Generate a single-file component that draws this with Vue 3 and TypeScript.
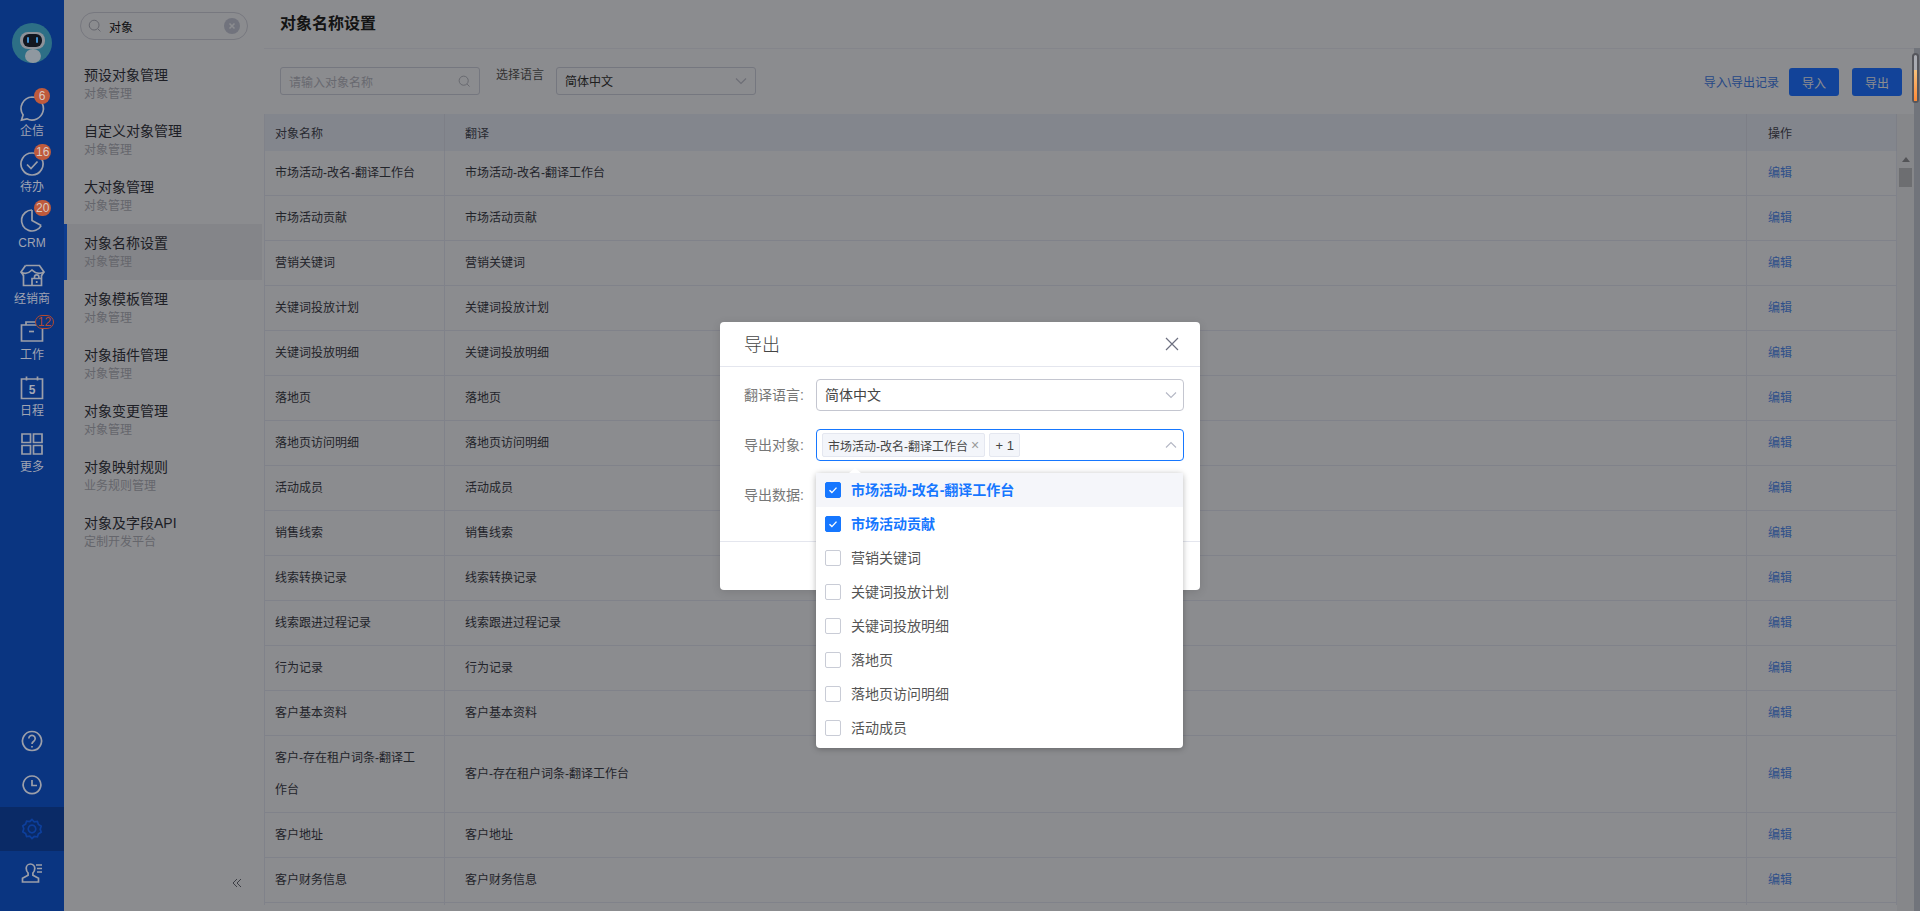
<template>
  <div class="page">
    <aside class="rail">
      <div class="avatar">
        <svg viewBox="0 0 40 40" width="40" height="40">
          <circle cx="20" cy="20" r="20" fill="#2d6f86" />
          <ellipse cx="21" cy="33" rx="8" ry="7" fill="#8f98a0" />
          <rect x="8" y="9" width="25" height="17" rx="8" fill="#8d9299" />
          <rect x="11" y="11" width="19" height="13" rx="6" fill="#11161f" />
          <rect x="15" y="14" width="2" height="6" rx="1" fill="#3f8fd0" />
          <rect x="24" y="14" width="2" height="6" rx="1" fill="#3f8fd0" />
        </svg>
      </div>
      <nav class="rail-top">
        <div v-for="item in railItems" :key="item.label" class="rail-item">
          <svg class="rail-icon" viewBox="0 0 28 28" width="28" height="28">
            <path v-for="d in item.paths" :key="d" :d="d" />
            <text v-if="item.day" x="14" y="18.500" class="day">{{ item.day }}</text>
          </svg>
          <span class="rail-label">{{ item.label }}</span>
          <span v-if="item.badge" class="badge" :class="{ outline: item.outline }">{{ item.badge }}</span>
        </div>
      </nav>
      <div class="rail-bottom">
        <div v-for="(tool, i) in railTools" :key="i" class="rail-tool" :class="{ active: tool.active }">
          <svg class="rail-icon" viewBox="0 0 28 28" width="28" height="28">
            <path v-for="d in tool.paths" :key="d" :d="d" />
          </svg>
        </div>
      </div>
    </aside>

    <section class="panel">
      <div class="panel-search">
        <svg viewBox="0 0 16 16" width="14" height="14" class="mag">
          <circle cx="7" cy="7" r="5.6" />
          <path d="M11.2 11.2l3 3" />
        </svg>
        <span class="panel-query">对象</span>
        <span class="panel-clear">
          <svg viewBox="0 0 16 16" width="16" height="16">
            <circle cx="8" cy="8" r="8" fill="#bcc0d0" />
            <path d="M5.5 5.5l5 5M10.5 5.5l-5 5" stroke="#e8e9f0" stroke-width="1.6" />
          </svg>
        </span>
      </div>
      <ul class="panel-list">
        <li v-for="m in menus" :key="m.title" class="panel-item" :class="{ current: m.current }">
          <div class="panel-title">{{ m.title }}</div>
          <div class="panel-sub">{{ m.sub }}</div>
        </li>
      </ul>
      <svg class="collapse" viewBox="0 0 10 10" width="10" height="10">
        <path d="M5 1L1 5l4 4M9 1L5 5l4 4" />
      </svg>
    </section>

    <main class="main">
      <header class="main-head">对象名称设置</header>
      <div class="toolbar">
        <div class="field search">
          <span class="placeholder">请输入对象名称</span>
          <svg viewBox="0 0 16 16" width="13" height="13" class="mag">
            <circle cx="7" cy="7" r="5.6" />
            <path d="M11.2 11.2l3 3" />
          </svg>
        </div>
        <span class="lang-label">选择语言</span>
        <div class="field lang">
          <span class="nudge">简体中文</span>
          <svg viewBox="0 0 12 8" width="12" height="8" class="chev"><path d="M1 1.5l5 5 5-5" /></svg>
        </div>
        <a class="records">导入\导出记录</a>
        <button class="btn">导入</button>
        <button class="btn">导出</button>
      </div>
      <div class="table-area">
        <div class="table-clip">
          <table class="grid">
            <colgroup>
              <col style="width: 180px" />
              <col />
              <col style="width: 150px" />
            </colgroup>
            <thead>
              <tr>
                <th>对象名称</th>
                <th>翻译</th>
                <th class="ops">操作</th>
              </tr>
            </thead>
            <tbody>
              <tr v-for="name in rows" :key="name">
                <td>{{ name }}</td>
                <td>{{ name }}</td>
                <td class="ops"><a class="edit">编辑</a></td>
              </tr>
              <tr class="cut"><td></td><td></td><td></td></tr>
            </tbody>
          </table>
        </div>
        <div class="table-bar">
          <span class="bar-arrow"></span>
          <span class="bar-thumb"></span>
        </div>
      </div>
    </main>
    <div class="page-strip"></div>

    <div class="mask">
      <div class="dialog">
        <div class="dialog-head">
          <span class="nudge">导出</span>
          <svg viewBox="0 0 14 14" width="14" height="14" class="close"><path d="M1 1l12 12M13 1L1 13" /></svg>
        </div>
        <div class="dialog-body">
          <div class="form-row">
            <label class="nudge">翻译语言:</label>
            <div class="control">
              <span class="nudge">简体中文</span>
              <svg viewBox="0 0 12 8" width="12" height="8" class="chev"><path d="M1 1.5l5 5 5-5" /></svg>
            </div>
          </div>
          <div class="form-row">
            <label class="nudge">导出对象:</label>
            <div class="control focused">
              <span class="tag">市场活动-改名-翻译工作台<i class="tag-x">×</i></span>
              <span class="tag more">+ 1</span>
              <svg viewBox="0 0 12 8" width="12" height="8" class="chev"><path d="M1 6.5l5-5 5 5" /></svg>
            </div>
          </div>
          <div class="form-row">
            <label class="nudge">导出数据:</label>
          </div>
        </div>
        <div class="dialog-foot"></div>

        <div class="dropdown">
          <span class="caret"></span>
          <div v-for="(opt, i) in options" :key="opt" class="option" :class="{ on: i < 2, hover: i === 0 }">
            <span class="box">
              <svg v-if="i < 2" viewBox="0 0 16 16" width="16" height="16"><path d="M4.5 8.2l2.4 2.4 4.6-5" /></svg>
            </span>
            <span class="nudge">{{ opt }}</span>
          </div>
        </div>
      </div>
    </div>
    <div class="page-thumb"><span></span></div>
  </div>
</template>

<script setup lang="ts">
interface RailItem {
  label: string;
  paths: string[];
  badge?: string;
  outline?: boolean;
  day?: string;
}

const railItems: RailItem[] = [
  {
    label: '企信',
    badge: '6',
    paths: ['M14 2a11.500 11.500 0 1 1-5.200 21.800L3.500 25l1.600-5A11.500 11.500 0 0 1 14 2z'],
  },
  {
    label: '待办',
    badge: '16',
    paths: ['M14 2a11 11 0 1 0 .01 0z', 'M9 13.500l4 4 6.500-7'],
  },
  {
    label: 'CRM',
    badge: '20',
    paths: ['M14 3a10.500 10.500 0 1 0 9.200 15.600', 'M14 3v10.500l9.200 5.100'],
  },
  {
    label: '经销商',
    paths: [
      'M7.500 2.500h14l4.500 6.500-2.500 3.500',
      'M7.500 2.500L3 9l2.500 3.500',
      'M3 9c3 2 7 2 11-2 4 4 8 4 12 2',
      'M5.500 12v10.500h18V12',
      'M14 22.500v-7h9.500',
      'M16.500 15.500V14a2.200 2.200 0 0 1 4.400 0v1.500',
      'M18.700 18v2',
    ],
  },
  {
    label: '工作',
    badge: '12',
    outline: true,
    paths: ['M3.500 6h21v16h-21z', 'M8 6V3h11', 'M11 12.500h5'],
  },
  {
    label: '日程',
    day: '5',
    paths: ['M3.500 4h21v19.500h-21z', 'M8.500 1.500v4M19.500 1.500v4'],
  },
  {
    label: '更多',
    paths: [
      'M4 3h8.500v8.500H4z',
      'M15.500 3H24v8.500h-8.500z',
      'M4 14.500h8.500V23H4z',
      'M15.500 14.500H24V23h-8.500z',
    ],
  },
];

const railTools: { paths: string[]; active?: boolean }[] = [
  {
    paths: [
      'M14 4.500a9.500 9.500 0 1 0 .01 0z',
      'M10.800 11.500a3.200 3.200 0 1 1 5 2.700c-1.200.8-1.800 1.400-1.800 2.800',
      'M14 19v1.600',
    ],
  },
  { paths: ['M14 5a8.800 8.800 0 1 0 .01 0z', 'M14 9v5.500h5'] },
  {
    active: true,
    paths: [
      'M14 4.500l2.200 2.400 3.200-.4 1 3 2.800 1.700-1 3 1 3-2.800 1.700-1 3-3.200-.4L14 23.500l-2.200-2.400-3.200.4-1-3-2.800-1.700 1-3-1-3 2.800-1.700 1-3 3.200.4z',
      'M14 10.200a3.800 3.800 0 1 0 .01 0z',
    ],
  },
  {
    paths: [
      'M12.500 5a4.300 4.300 0 0 0-4.300 4.300c0 2 .8 3.600 1.900 4.700v2.300l-5.600 3V23h16v-3.700l-5.600-3V14c1.100-1.100 1.900-2.700 1.900-4.700A4.300 4.300 0 0 0 12.500 5z',
      'M18 6h6M19 9.500h5M19 13h5',
    ],
  },
];

const menus = [
  { title: '预设对象管理', sub: '对象管理' },
  { title: '自定义对象管理', sub: '对象管理' },
  { title: '大对象管理', sub: '对象管理' },
  { title: '对象名称设置', sub: '对象管理', current: true },
  { title: '对象模板管理', sub: '对象管理' },
  { title: '对象插件管理', sub: '对象管理' },
  { title: '对象变更管理', sub: '对象管理' },
  { title: '对象映射规则', sub: '业务规则管理' },
  { title: '对象及字段API', sub: '定制开发平台' },
];

const rows = [
  '市场活动-改名-翻译工作台',
  '市场活动贡献',
  '营销关键词',
  '关键词投放计划',
  '关键词投放明细',
  '落地页',
  '落地页访问明细',
  '活动成员',
  '销售线索',
  '线索转换记录',
  '线索跟进过程记录',
  '行为记录',
  '客户基本资料',
  '客户-存在租户词条-翻译工作台',
  '客户地址',
  '客户财务信息',
];

const options = rows.slice(0, 8);
</script>

<style>
html,
body {
  margin: 0;
  height: 100%;
  overflow: hidden;
}
</style>

<style scoped>
.page {
  display: flex;
  height: 911px;
  overflow: hidden;
  position: relative;
  background: #e8e9ee;
  color: #2b2d38;
  font-family: "Liberation Sans", "Noto Sans CJK SC", sans-serif;
  font-size: 12px;
}

/* CJK glyphs sit a pixel low against the reference */
.nudge {
  margin-top: -2px;
}

/* rail sits above the mask, its colours are already dimmed */
.rail {
  width: 64px;
  flex: none;
  display: flex;
  flex-direction: column;
  background: #0a3581;
  color: #a0a4b2;
  position: relative;
  z-index: 20;
}

.avatar {
  height: 40px;
  margin: 23px 12px 29px;
}

.rail-item {
  position: relative;
  height: 56px;
  padding-top: 3px;
  box-sizing: border-box;
  display: flex;
  flex-direction: column;
  align-items: center;
}

.rail-icon {
  fill: none;
  stroke: #9c9fa9;
  stroke-width: 1.7;
}

.day {
  fill: #a4a8b6;
  stroke: none;
  font-size: 12px;
  font-weight: 700;
  text-anchor: middle;
}

.rail-label {
  line-height: 16px;
}

.badge {
  position: absolute;
  top: -4px;
  left: 34px;
  min-width: 16px;
  height: 16px;
  padding: 0 2px;
  box-sizing: border-box;
  border-radius: 8px;
  background: #bf5a3c;
  color: #d9c9c2;
  font-size: 12px;
  line-height: 16px;
  text-align: center;
}

.badge.outline {
  top: -1px;
  left: 35px;
  width: 19px;
  height: 14px;
  padding: 0;
  line-height: 12px;
  border: 1px solid #b34b30;
  background: #0a3581;
  color: #b34b30;
}

.rail-bottom {
  margin-top: auto;
  padding-bottom: 16px;
}

.rail-tool {
  height: 44px;
  display: flex;
  align-items: center;
  justify-content: center;
}

.rail-tool.active {
  background: #0a2a66;
}

.rail-tool.active .rail-icon {
  stroke: #0d3f9c;
}

.panel {
  width: 200px;
  flex: none;
  position: relative;
}

.panel-search {
  height: 28px;
  margin: 12px 16px 16px;
  padding: 0 7px;
  display: flex;
  align-items: center;
  border: 1px solid #c6c8d4;
  border-radius: 14px;
  box-sizing: border-box;
}

.mag {
  fill: none;
  stroke: #a5a8b4;
  stroke-width: 1.1;
}

.panel-query {
  margin-left: 7px;
  color: #1a1a22;
}

.panel-clear {
  margin-left: auto;
  display: flex;
}

.panel-list {
  list-style: none;
  margin: 0;
  padding: 0;
}

.panel-item {
  height: 56px;
  margin-right: 2px;
  padding: 10px 20px 0;
  box-sizing: border-box;
}

.panel-item.current {
  background: #dddee4;
  box-shadow: inset 3px 0 0 #1464f0;
}

.panel-title {
  font-size: 14px;
  line-height: 18px;
  color: #33353f;
}

.panel-sub {
  line-height: 20px;
  color: #a9abb5;
}

.collapse {
  position: absolute;
  left: 168px;
  bottom: 23px;
  fill: none;
  stroke: #666873;
  stroke-width: 1;
}

.main {
  flex: 1;
  min-width: 0;
  display: flex;
  flex-direction: column;
}

.main-head {
  height: 48px;
  padding-left: 16px;
  line-height: 47px;
  font-size: 16px;
  font-weight: 700;
  color: #222;
  border-bottom: 1px solid #dcdee8;
}

.toolbar {
  height: 65px;
  padding: 18px 12px 0 16px;
  box-sizing: border-box;
  display: flex;
  align-items: flex-start;
  flex: none;
}

.field {
  width: 200px;
  height: 28px;
  padding: 0 8px;
  display: flex;
  align-items: center;
  justify-content: space-between;
  box-sizing: border-box;
  border: 1px solid #c3c6d4;
  border-radius: 3px;
  color: #333;
}

.placeholder {
  color: #aeb0bb;
}

.lang-label {
  margin: 0 12px 0 16px;
  line-height: 17px;
  color: #555;
}

.chev {
  fill: none;
  stroke: #b4b7c4;
  stroke-width: 1.1;
}

.records {
  margin: 8px 10px 0 auto;
  line-height: 16px;
  color: #3f78e0;
}

.btn {
  width: 50px;
  height: 28px;
  margin-top: 1px;
  margin-left: 0;
  border: 0;
  border-radius: 3px;
  background: #1e71ff;
  color: #e9e9ee;
  font: inherit;
  padding: 0;
}

.btn + .btn {
  margin-left: 13px;
}

.table-area {
  flex: 1;
  min-height: 0;
  display: flex;
}

.table-clip {
  flex: 1;
  min-width: 0;
  height: 791px;
  overflow: hidden;
}

.grid {
  width: 100%;
  table-layout: fixed;
  border-collapse: collapse;
  border-left: 1px solid #d6d9e6;
}

.grid th {
  height: 37px;
  padding: 0 20px;
  box-sizing: border-box;
  font-weight: 400;
  text-align: left;
  color: #454752;
  background: #dadfec;
  border-right: 1px solid #d0d4e2;
}

.grid td {
  padding: 6px 20px;
  line-height: 32px;
  color: #3a3c48;
  border-right: 1px solid #d6d9e6;
  border-bottom: 1px solid #d6d9e6;
  word-break: break-all;
}

.grid th:first-child,
.grid td:first-child {
  padding-left: 10px;
  padding-right: 25px;
}

.grid .ops {
  padding-left: 21px;
}

.grid .cut td {
  height: 45px;
}

.edit {
  color: #4f86e6;
}

.table-bar {
  width: 17px;
  flex: none;
  position: relative;
  background: #e0e1e6;
}

.bar-arrow {
  position: absolute;
  top: 43px;
  left: 5px;
  border: 4px solid transparent;
  border-top: 0;
  border-bottom: 5px solid #8b8c92;
}

.bar-thumb {
  position: absolute;
  top: 54px;
  left: 2px;
  width: 13px;
  height: 19px;
  background: #b6b7bc;
}

.page-strip {
  width: 6px;
  flex: none;
  margin-top: 48px;
  background: #bdc2ce;
}

.mask {
  position: absolute;
  inset: 0;
  z-index: 10;
  padding-top: 322px;
  box-sizing: border-box;
  display: flex;
  justify-content: center;
  align-items: flex-start;
  background: rgba(0, 0, 0, 0.4);
}

.dialog {
  width: 480px;
  height: 268px;
  position: relative;
  display: flex;
  flex-direction: column;
  background: #fff;
  border-radius: 4px;
  box-shadow: 0 2px 10px rgba(0, 0, 0, 0.12);
}

.dialog-head {
  height: 44px;
  flex: none;
  padding: 0 21px 0 24px;
  display: flex;
  align-items: center;
  justify-content: space-between;
  font-size: 18px;
  font-weight: 300;
  color: #444;
  border-bottom: 1px solid #e4e6ee;
}

.close {
  fill: none;
  stroke: #6d7080;
  stroke-width: 1.2;
}

.dialog-body {
  height: 174px;
  flex: none;
  padding: 12px 16px 0 24px;
  box-sizing: border-box;
}

.form-row {
  height: 32px;
  margin-bottom: 18px;
  display: flex;
  align-items: center;
}

.form-row label {
  width: 72px;
  flex: none;
  font-size: 14px;
  color: #777;
}

.control {
  flex: 1;
  height: 32px;
  padding: 0 8px;
  box-sizing: border-box;
  display: flex;
  align-items: center;
  position: relative;
  font-size: 14px;
  color: #444;
  border: 1px solid #c4c6d0;
  border-radius: 4px;
}

.control .chev {
  position: absolute;
  right: 6px;
  top: 11px;
}

.control.focused {
  padding: 0 5px;
  border-color: #1677ff;
  gap: 4px;
}

.tag {
  height: 24px;
  padding: 0 5px;
  box-sizing: border-box;
  display: flex;
  align-items: center;
  font-size: 12px;
  color: #444;
  background: #f3f5fa;
  border: 1px solid #e4e7f0;
  border-radius: 2px;
}

.tag-x {
  margin-left: 3px;
  font-style: normal;
  font-size: 14px;
  color: #999;
}

.tag.more {
  padding: 0 5px;
  width: 31px;
  justify-content: center;
  font-size: 13px;
}

.dialog-foot {
  flex: 1;
  border-top: 1px solid #e4e6ee;
}

.dropdown {
  position: absolute;
  top: 151px;
  left: 96px;
  width: 367px;
  height: 275px;
  background: #fff;
  border-radius: 4px;
  box-shadow: 0 1px 6px rgba(0, 0, 0, 0.28);
}

.caret {
  position: absolute;
  top: -5px;
  left: 33px;
  border: 6px solid transparent;
  border-top: 0;
  border-bottom: 5px solid #fff;
}

.option {
  height: 34px;
  padding-left: 9px;
  display: flex;
  align-items: center;
  gap: 10px;
  font-size: 14px;
  color: #555;
}

.option.hover {
  background: #f5f6fa;
}

.option.on {
  color: #1677ff;
  font-weight: 700;
}

.box {
  width: 16px;
  height: 16px;
  box-sizing: border-box;
  border: 1px solid #c9ccd6;
  border-radius: 2px;
  display: flex;
  align-items: center;
  justify-content: center;
}

.option.on .box {
  background: #1677ff;
  border-color: #1677ff;
}

.box svg {
  flex: none;
  fill: none;
  stroke: #fff;
  stroke-width: 1.4;
}

.page-thumb {
  position: absolute;
  z-index: 30;
  top: 53px;
  right: 1px;
  width: 7px;
  height: 50px;
  box-sizing: border-box;
  padding-top: 15px;
  border: 2px solid #55565c;
  border-radius: 4px;
  background: #a9abb2;
}

.page-thumb span {
  display: block;
  height: 100%;
  background: linear-gradient(#f7c27e, #ff8a36);
}
</style>
